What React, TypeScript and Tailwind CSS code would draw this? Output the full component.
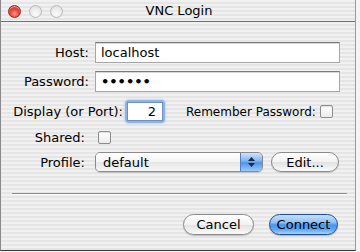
import React from "react";

const stripes =
  "bg-[repeating-linear-gradient(to_bottom,#f1f1f1_0px,#f1f1f1_2px,#e5e5e5_2px,#e5e5e5_4px)]";

function Light({ red }: { red?: boolean }) {
  return red ? (
    <div className="w-[13px] h-[13px] rounded-full border border-[#8a2a22] bg-[radial-gradient(circle_at_50%_70%,#ff9a8a_0%,#e8453a_45%,#b3241b_100%)] shadow-[inset_0_1px_1px_rgba(255,255,255,0.6)]" />
  ) : (
    <div className="w-[13px] h-[13px] rounded-full border border-[#b9b9b9] bg-[radial-gradient(circle_at_50%_70%,#fbfbfb_0%,#e9e9e9_60%,#d2d2d2_100%)]" />
  );
}

function Checkbox() {
  return (
    <div className="w-[13px] h-[13px] rounded-[2px] border border-[#8d8d8d] bg-[linear-gradient(to_bottom,#ffffff,#ececec)] shadow-[inset_0_1px_1px_rgba(0,0,0,0.12)]" />
  );
}

function TextField({ w, children, className = "" }: { w: string; children?: React.ReactNode; className?: string }) {
  return (
    <div
      className={`${w} h-[21px] bg-white border border-[#a6a6a6] border-t-[#7c7c7c] shadow-[inset_0_1px_0_#d8d8d8] flex items-center px-[5px] ${className}`}
    >
      {children}
    </div>
  );
}

export default function App() {
  return (
    <div
      className="w-[360px] h-[252px] bg-[#f4f4f4] text-black"
      style={{ fontFamily: '"DejaVu Sans", "Liberation Sans", sans-serif' }}
    >
      <div className="w-[356px] h-[251px] border-l border-l-[#8a8a8a] border-r border-r-[#9a9a9a] border-b border-b-[#3a3a3a] flex flex-col">
        {/* title bar */}
        <div className={`h-[22px] shrink-0 border-b border-b-[#6f6f6f] ${stripes} flex items-center relative`}>
          <div className="flex gap-[8px] pl-[7px] pt-[1px]">
            <Light red />
            <Light />
            <Light />
          </div>
          <div className="absolute inset-0 flex items-center justify-center text-[13px] leading-none pl-[2px]">
            VNC Login
          </div>
        </div>

        {/* content */}
        <div className={`flex-1 ${stripes} flex flex-col pl-[11px] pt-[20px] text-[13px] leading-none`}>
          <div className="flex items-center h-[21px]">
            <div className="w-[77px] text-right">Host:</div>
            <TextField w="w-[245px]" className="ml-[6px]">
              <span>localhost</span>
            </TextField>
          </div>

          <div className="flex items-center h-[21px] mt-[8px]">
            <div className="w-[77px] text-right">Password:</div>
            <TextField w="w-[245px]" className="ml-[6px]">
              <span className="text-[13px] font-bold tracking-[0px]">••••••</span>
            </TextField>
          </div>

          <div className="flex items-center h-[21px] mt-[9px]">
            <div className="w-[111px] text-right">Display (or Port):</div>
            <div className="ml-[4px] rounded-[2px] shadow-[0_0_0_2px_#8fb4e3,0_0_2px_3px_#c4d8f0]">
              <div className="w-[36px] h-[19px] bg-white border border-[#6f8fbf] flex items-center justify-end pr-[6px]">
                2
              </div>
            </div>
            <div className="ml-[23px] text-[12px] w-[134px]">Remember Password:</div>
            <Checkbox />
          </div>

          <div className="flex items-center h-[13px] mt-[9px]">
            <div className="w-[73px] text-right">Shared:</div>
            <div className="ml-[13px]">
              <Checkbox />
            </div>
          </div>

          <div className="flex items-center h-[20px] mt-[8px]">
            <div className="w-[73px] text-right">Profile:</div>
            <div className="ml-[10px] w-[168px] h-[20px] rounded-[5px] border border-[#8a8a8a] flex overflow-hidden shadow-[0_1px_1px_rgba(0,0,0,0.15)]">
              <div className="flex-1 bg-[linear-gradient(to_bottom,#ffffff_0%,#f4f4f4_50%,#e6e6e6_51%,#f6f6f6_100%)] flex items-center pl-[7px]">
                default
              </div>
              <div className="w-[22px] border-l border-l-[#4f7fc4] bg-[linear-gradient(to_bottom,#cfe3fb_0%,#7fb2f0_45%,#4f93ea_55%,#9ccaf8_100%)] flex flex-col items-center justify-center gap-[2px]">
                <svg width="7" height="4" viewBox="0 0 7 4">
                  <path d="M0 4 L3.5 0 L7 4 Z" fill="#1d2a45" />
                </svg>
                <svg width="7" height="4" viewBox="0 0 7 4">
                  <path d="M0 0 L3.5 4 L7 0 Z" fill="#1d2a45" />
                </svg>
              </div>
            </div>
            <div className="ml-[8px] w-[68px] h-[20px] rounded-full border border-[#8a8a8a] bg-[linear-gradient(to_bottom,#ffffff_0%,#f2f2f2_50%,#e2e2e2_51%,#fafafa_100%)] flex items-center justify-center shadow-[0_1px_1px_rgba(0,0,0,0.15)]">
              Edit...
            </div>
          </div>

          <div className="mt-[21px] mr-[8px] h-[1px] bg-[#8c8c8c] border-b border-b-[#fafafa] box-content" />

          <div className="flex justify-end mt-[19px] pr-[17px] gap-[15px]">
            <div className="w-[71px] h-[21px] rounded-full border border-[#8a8a8a] bg-[linear-gradient(to_bottom,#ffffff_0%,#f2f2f2_50%,#e2e2e2_51%,#fafafa_100%)] flex items-center justify-center shadow-[0_1px_1px_rgba(0,0,0,0.2)]">
              Cancel
            </div>
            <div className="w-[69px] h-[21px] rounded-full border border-[#1f4d96] bg-[linear-gradient(to_bottom,#c7e0fb_0%,#8ec0f5_40%,#4b95ea_52%,#5aa6f2_75%,#a6d4ff_100%)] flex items-center justify-center shadow-[0_1px_1px_rgba(0,0,0,0.25)]">
              Connect
            </div>
          </div>
        </div>
      </div>
    </div>
  );
}
